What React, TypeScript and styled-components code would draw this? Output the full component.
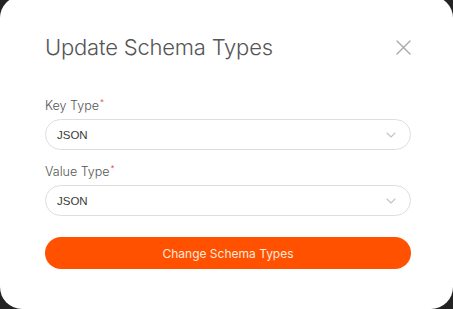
import React from "react";
import styled, { createGlobalStyle } from "styled-components";

const ORANGE = "#FF5100";
const TEXT_GREY = "#555555";
const BORDER = "#dedede";

const GlobalStyle = createGlobalStyle`
  html, body {
    margin: 0;
    padding: 0;
    background: #232323;
    overflow: hidden;
  }
  body {
    font-family: Inter, "Liberation Sans", Arial, sans-serif;
  }
`;

const Backdrop = styled.div`
  width: 453px;
  height: 309px;
  overflow: hidden;
`;

const Modal = styled.div`
  box-sizing: border-box;
  width: 453px;
  height: 313px;
  margin-top: -4px;
  padding: 36px 42px 0 45px;
  background: #ffffff;
  border-radius: 22px;
  display: flex;
  flex-direction: column;
`;

const Header = styled.div`
  display: flex;
  align-items: center;
  justify-content: space-between;
  height: 30px;
  margin-bottom: 33px;
`;

const Title = styled.h2`
  margin: 0;
  font-size: 22px;
  font-weight: 300;
  color: ${TEXT_GREY};
  letter-spacing: -0.2px;
`;

const CloseButton = styled.button`
  display: flex;
  align-items: center;
  justify-content: flex-end;
  width: 17px;
  height: 20px;
  padding: 0;
  border: none;
  background: none;
  cursor: pointer;
`;

const Field = styled.div`
  display: flex;
  flex-direction: column;
  margin-bottom: 11px;
`;

const Label = styled.label`
  font-size: 12.5px;
  font-weight: 300;
  color: ${TEXT_GREY};
  margin-bottom: 6px;
  line-height: 15px;
`;

const Required = styled.sup`
  color: #e53935;
  font-size: 8px;
  margin-left: 1px;
  vertical-align: 5px;
`;

const Select = styled.div`
  box-sizing: border-box;
  display: flex;
  align-items: center;
  justify-content: space-between;
  height: 31px;
  padding: 0 14px 0 11px;
  border: 1px solid ${BORDER};
  border-radius: 16px;
  font-family: "Liberation Sans", Arial, sans-serif;
  font-size: 11.5px;
  color: #3a3a3a;
`;

const SubmitButton = styled.button`
  height: 32px;
  margin-top: 10px;
  border: none;
  border-radius: 16px;
  background: ${ORANGE};
  color: #ffe9dd;
  font-family: Inter, "Liberation Sans", Arial, sans-serif;
  font-size: 12px;
  font-weight: 400;
  cursor: pointer;
`;

function Chevron() {
  return (
    <svg width="10" height="6" viewBox="0 0 10 6" fill="none">
      <path d="M1 1l4 4 4-4" stroke="#c4c4c4" strokeWidth="1.1" strokeLinecap="round" strokeLinejoin="round" />
    </svg>
  );
}

function CloseIcon() {
  return (
    <svg width="15" height="15" viewBox="0 0 15 15" fill="none">
      <path d="M1 1l13 13M14 1L1 14" stroke="#a8a8a8" strokeWidth="1.4" strokeLinecap="round" />
    </svg>
  );
}

function SelectField({ label, value }: { label: string; value: string }) {
  return (
    <Field>
      <Label>
        {label}
        <Required>*</Required>
      </Label>
      <Select>
        <span>{value}</span>
        <Chevron />
      </Select>
    </Field>
  );
}

export default function App() {
  return (
    <>
      <GlobalStyle />
      <Backdrop>
        <Modal>
          <Header>
            <Title>Update Schema Types</Title>
            <CloseButton aria-label="Close">
              <CloseIcon />
            </CloseButton>
          </Header>
          <SelectField label="Key Type" value="JSON" />
          <SelectField label="Value Type" value="JSON" />
          <SubmitButton>Change Schema Types</SubmitButton>
        </Modal>
      </Backdrop>
    </>
  );
}
